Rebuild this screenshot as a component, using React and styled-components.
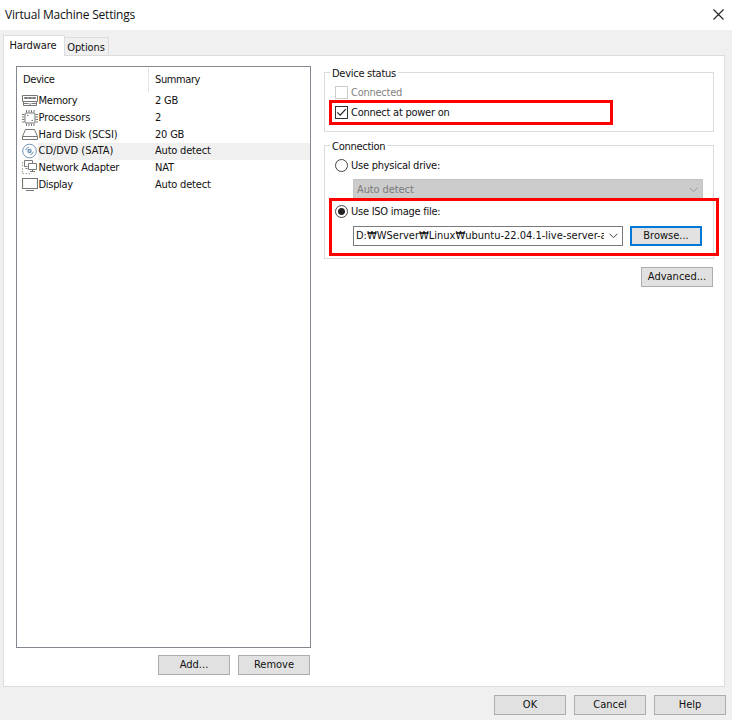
import React, { useState } from 'react';
import styled, { createGlobalStyle } from 'styled-components';

const devices = [
  { id: 'memory', name: 'Memory', summary: '2 GB', spacing: -0.25 },
  { id: 'cpu', name: 'Processors', summary: '2', spacing: -0.1 },
  { id: 'disk', name: 'Hard Disk (SCSI)', summary: '20 GB', spacing: -0.15 },
  { id: 'cd', name: 'CD/DVD (SATA)', summary: 'Auto detect', spacing: 0 },
  { id: 'network', name: 'Network Adapter', summary: 'NAT', spacing: -0.2 },
  { id: 'display', name: 'Display', summary: 'Auto detect', spacing: -0.3 },
];

function DeviceIcon({ id }) {
  return (
    <Icon viewBox="0 0 16 16">
      {id === 'memory' && (
        <>
          <path d="M.5 2.5h15v6H.5zM1.5 8.5v4h13v-4M1.5 10.5h5M9.5 10.5h5M8 10v2" />
          <path d="M2.5 4.5h3v1h-3zM6.5 4.5h3v1h-3zM10.5 4.5h3v1h-3z" />
        </>
      )}
      {id === 'cpu' && (
        <>
          <rect x="3" y="3" width="10" height="10" rx="1" />
          <path d="M4.5 0v2.5M7 0v2.5M9.5 0v2.5M12 0v2.5M4.5 13.5V16M7 13.5V16M9.5 13.5V16M12 13.5V16M0 4.5h2.5M0 7h2.5M0 9.5h2.5M0 12h2.5M13.5 4.5H16M13.5 7H16M13.5 9.5H16M13.5 12H16M5 5.5h1.5M9.5 10.5H11" />
        </>
      )}
      {id === 'disk' && <path d="M3.5 2.5h9l3 7v3H.5v-3zM.5 9.5h15" />}
      {id === 'cd' && (
        <g stroke="#6f94b5">
          <circle cx="7.5" cy="8" r="6.8" />
          <circle cx="7.5" cy="8" r="1.5" strokeWidth="1.4" />
          <path d="M3.7 7.3A4 4 0 0 1 6.8 4.2M11.3 8.7A4 4 0 0 1 8.2 11.8" />
        </g>
      )}
      {id === 'network' && (
        <>
          <path d="M10.5 3.5v-3h-8v6h3M3.5 8.5h2" />
          <path d="M6.5 3.5h8v6h-8zM10.5 9.5v2M8 11.5h5" />
          <path d="M.5 2v12M.5 13.5H10" strokeDasharray="1.5 1.5" opacity=".7" />
        </>
      )}
      {id === 'display' && <path d="M.5 1.5h15v10H.5zM4 13.5h8" strokeWidth="1.2" />}
    </Icon>
  );
}

function Chevron({ color }) {
  return (
    <ChevronIcon viewBox="0 0 9 6">
      <path d="M.5.7l4 4 4-4" fill="none" stroke={color} />
    </ChevronIcon>
  );
}

function App() {
  const [selected, setSelected] = useState('cd');

  return (
    <Dialog>
      <GlobalStyle />
      <TitleBar>
        <Title>Virtual Machine Settings</Title>
        <CloseIcon viewBox="0 0 11 11">
          <path d="M.5.5l10 10M10.5.5l-10 10" fill="none" stroke="#222" strokeWidth="1.1" />
        </CloseIcon>
      </TitleBar>
      <Tabs>
        <Tab $active>Hardware</Tab>
        <Tab>Options</Tab>
      </Tabs>
      <Page>
        <DeviceColumn>
          <DeviceList>
            <ListHeader>
              <HeaderCell>Device</HeaderCell>
              <HeaderCell $divided>Summary</HeaderCell>
            </ListHeader>
            {devices.map((device) => (
              <DeviceRow key={device.id} onClick={() => setSelected(device.id)}>
                <DeviceIcon id={device.id} />
                <DeviceInfo $selected={device.id === selected}>
                  <DeviceName $spacing={device.spacing}>{device.name}</DeviceName>
                  <span>{device.summary}</span>
                </DeviceInfo>
              </DeviceRow>
            ))}
          </DeviceList>
          <ListActions>
            <Button>Add...</Button>
            <Button>Remove</Button>
          </ListActions>
        </DeviceColumn>

        <OptionsColumn>
          <Group $height={60}>
            <Legend>Device status</Legend>
            <OptionRow $disabled>
              <CheckBox $disabled />
              Connected
            </OptionRow>
            <OptionRow>
              <CheckBox>
                <svg width="11" height="11" viewBox="0 0 11 11">
                  <path d="M1.3 5.3l2.9 2.9 5.6-6" fill="none" stroke="#222" strokeWidth="1.2" />
                </svg>
              </CheckBox>
              Connect at power on
            </OptionRow>
            <Highlight $top={27} $width={284} $height={25} />
          </Group>

          <Group $height={114} $top={13}>
            <Legend>Connection</Legend>
            <OptionRow>
              <Radio />
              Use physical drive:
            </OptionRow>
            <DriveSelect>
              Auto detect
              <Chevron color="#999" />
            </DriveSelect>
            <OptionRow>
              <Radio $checked />
              Use ISO image file:
            </OptionRow>
            <FileRow>
              <FileSelect>
                <FilePath>D:₩WServer₩Linux₩ubuntu-22.04.1-live-server-a</FilePath>
                <Chevron color="#444" />
              </FileSelect>
              <Button $focused>Browse...</Button>
            </FileRow>
            <Highlight $top={52} $width={390} $height={58} />
          </Group>
          <AdvancedRow>
            <Button>Advanced...</Button>
          </AdvancedRow>
        </OptionsColumn>
      </Page>
      <Footer>
        <Button>OK</Button>
        <Button>Cancel</Button>
        <Button>Help</Button>
      </Footer>
    </Dialog>
  );
}

const GlobalStyle = createGlobalStyle`
  * {
    box-sizing: border-box;
  }

  body {
    margin: 0;
  }
`;

const Dialog = styled.div`
  display: flex;
  flex-direction: column;
  width: 732px;
  height: 720px;
  overflow: hidden;
  background: #f0f0f0;
  color: #111;
  font-family: "DejaVu Sans Condensed", "DejaVu Sans", "Noto Sans CJK KR", sans-serif;
  font-stretch: condensed;
  font-size: 11px;
  line-height: 16px;
  white-space: nowrap;
`;

const TitleBar = styled.div`
  display: flex;
  align-items: center;
  justify-content: space-between;
  height: 30px;
  flex-shrink: 0;
  padding: 0 8px 2px 5px;
  background: #fff;
`;

const Title = styled.span`
  padding-top: 2px;
  font-family: "Open Sans", "Noto Sans", sans-serif;
  font-stretch: normal;
  font-size: 12px;
  letter-spacing: -0.2px;
`;

const CloseIcon = styled.svg`
  width: 11px;
  height: 11px;
`;

const Tabs = styled.div`
  display: flex;
  align-items: flex-end;
  height: 25px;
  flex-shrink: 0;
  margin-left: 3px;
`;

const Tab = styled.div`
  position: relative;
  z-index: ${({ $active }) => ($active ? 1 : 0)};
  display: flex;
  align-items: center;
  justify-content: center;
  width: ${({ $active }) => ($active ? '62px' : '44px')};
  height: ${({ $active }) => ($active ? '21px' : '18px')};
  margin-bottom: ${({ $active }) => ($active ? '-1px' : '0')};
  padding: ${({ $active }) => ($active ? '0 2px 0 0' : '2px 1px 0 0')};
  border: 1px solid #dcdcdc;
  border-bottom: none;
  border-left-width: ${({ $active }) => ($active ? '1px' : '0')};
  background: ${({ $active }) => ($active ? '#fff' : '#f0f0f0')};
  letter-spacing: -0.1px;
`;

const Page = styled.div`
  display: flex;
  gap: 13px;
  width: 722px;
  height: 632px;
  flex-shrink: 0;
  margin-left: 3px;
  padding: 10px 0 0 12px;
  border: 1px solid #dcdcdc;
  background: #fff;
`;

const DeviceColumn = styled.div`
  width: 295px;
`;

const DeviceList = styled.div`
  height: 582px;
  border: 1px solid #828790;
`;

const ListHeader = styled.div`
  display: flex;
  height: 25.6px;
  padding-top: 1px;
`;

const HeaderCell = styled.div`
  width: ${({ $divided }) => ($divided ? '161px' : '131px')};
  height: 24px;
  padding: 4px 0 0 6px;
  border-left: ${({ $divided }) => ($divided ? '1px solid #e2e2e2' : 'none')};
  letter-spacing: -0.4px;
`;

const DeviceRow = styled.div`
  display: flex;
  align-items: center;
  height: 16.8px;
  padding-left: 5px;
`;

const Icon = styled.svg`
  width: 16px;
  height: 16px;
  flex-shrink: 0;
  fill: none;
  stroke: #777;
`;

const DeviceInfo = styled.div`
  display: flex;
  align-items: center;
  flex: 1;
  height: 100%;
  background: ${({ $selected }) => ($selected ? '#f0f0f0' : 'transparent')};
  letter-spacing: -0.2px;
`;

const DeviceName = styled.span`
  width: 117px;
  padding-left: 0.5px;
  letter-spacing: ${({ $spacing }) => $spacing}px;
`;

const ListActions = styled.div`
  display: flex;
  justify-content: flex-end;
  gap: 8px;
  padding: 7px 1px 0 0;
`;

const Button = styled.button`
  width: 72px;
  height: 20px;
  flex-shrink: 0;
  padding: 0;
  border: ${({ $focused }) => ($focused ? '2px solid #0078d7' : '1px solid #adadad')};
  background: #e1e1e1;
  color: #111;
  font: inherit;
  line-height: 16px;
`;

const OptionsColumn = styled.div`
  width: 390px;
  padding-top: 6px;
`;

const Group = styled.div`
  position: relative;
  height: ${({ $height }) => $height}px;
  margin-top: ${({ $top = 0 }) => $top}px;
  padding: 0 10px;
  border: 1px solid #dcdcdc;
`;

const Legend = styled.div`
  width: fit-content;
  height: 16px;
  margin: -8px 0 2px -5px;
  padding: 0 2px;
  background: #fff;
  letter-spacing: -0.27px;
  line-height: 17px;
`;

const OptionRow = styled.div`
  display: flex;
  align-items: center;
  gap: 3px;
  height: 20px;
  color: ${({ $disabled }) => ($disabled ? '#838383' : '#111')};
  letter-spacing: -0.25px;
`;

const CheckBox = styled.span`
  display: flex;
  width: 13px;
  height: 13px;
  margin-top: -1px;
  border: 1px solid ${({ $disabled }) => ($disabled ? '#ccc' : '#333')};
`;

const Radio = styled.span`
  width: 13px;
  height: 13px;
  margin-top: -1px;
  border: 1px solid #444;
  border-radius: 50%;
  background: ${({ $checked }) =>
    $checked ? 'radial-gradient(circle, #222 3px, #fff 4px)' : '#fff'};
`;

const DriveSelect = styled.div`
  display: flex;
  align-items: center;
  justify-content: space-between;
  width: 350px;
  height: 20px;
  margin: 3px 0 3px 18px;
  padding: 2px 4px 0 3px;
  border: 1px solid #c4c4c4;
  background: #ccc;
  color: #7b7b7b;
  letter-spacing: -0.1px;
`;

const FileRow = styled.div`
  display: flex;
  gap: 7px;
  margin: 4px 0 0 18px;
`;

const FileSelect = styled.div`
  display: flex;
  align-items: center;
  justify-content: space-between;
  width: 270px;
  height: 20px;
  padding: 0 4px 0 2px;
  border: 1px solid #7a7a7a;
  background: #fff;
`;

const FilePath = styled.span`
  width: 248px;
  overflow: hidden;
`;

const ChevronIcon = styled.svg`
  width: 9px;
  height: 6px;
`;

const Highlight = styled.div`
  position: absolute;
  top: ${({ $top }) => $top}px;
  left: 4px;
  width: ${({ $width }) => $width}px;
  height: ${({ $height }) => $height}px;
  border: 3px solid #f00;
  pointer-events: none;
`;

const AdvancedRow = styled.div`
  display: flex;
  justify-content: flex-end;
  padding: 8px 1px 0 0;
`;

const Footer = styled.div`
  display: flex;
  justify-content: flex-end;
  gap: 8px;
  padding: 8px 6px 0 0;
`;

export default App;
